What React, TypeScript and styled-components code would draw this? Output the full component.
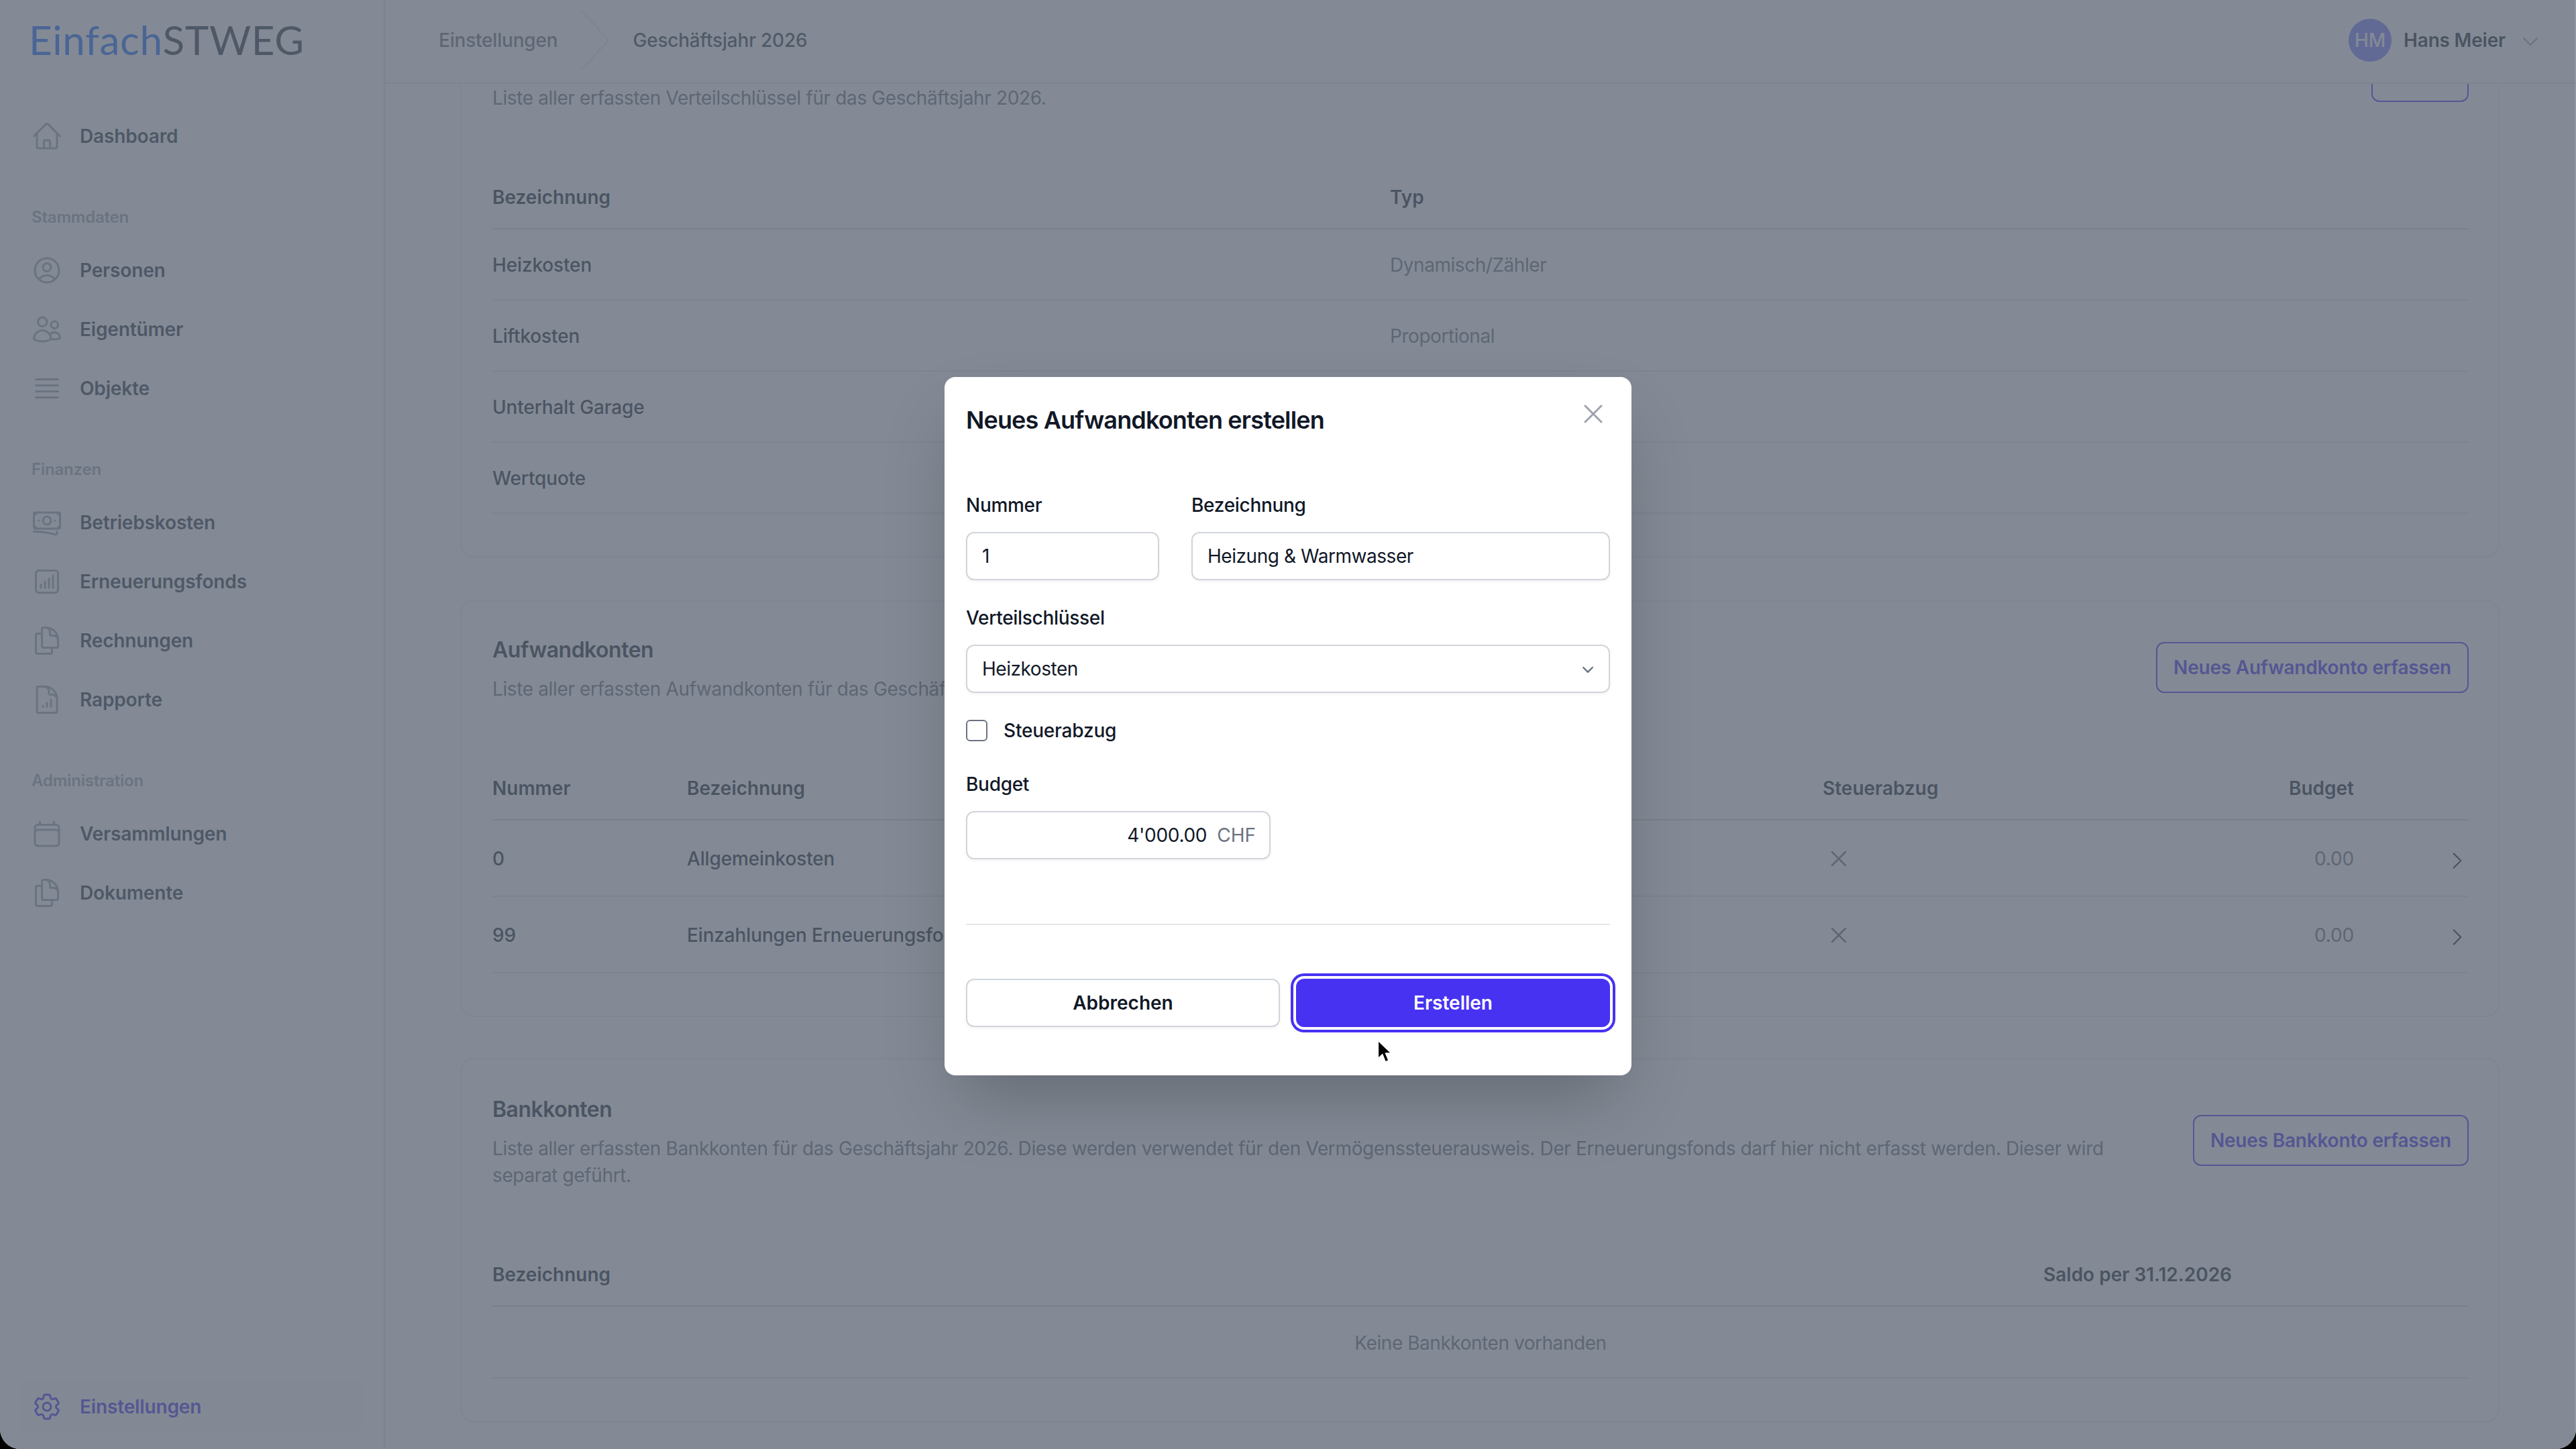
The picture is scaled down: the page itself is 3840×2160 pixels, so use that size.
import React from 'react';
import styled, { createGlobalStyle } from 'styled-components';
import {
  HiOutlineBanknotes,
  HiOutlineBars4,
  HiOutlineCalendar,
  HiOutlineChartBarSquare,
  HiOutlineChevronDown,
  HiOutlineChevronRight,
  HiOutlineCog6Tooth,
  HiOutlineDocumentChartBar,
  HiOutlineDocumentDuplicate,
  HiOutlineHome,
  HiOutlineUserCircle,
  HiOutlineUsers,
  HiOutlineXMark,
  HiMiniChevronDown,
} from 'react-icons/hi2';

const indigo = '#4732f2';

const GlobalStyle = createGlobalStyle`
  html, body {
    margin: 0;
    background: #000;
  }
  body {
    font-family: Inter, "Liberation Sans", sans-serif;
    font-size: 28px;
    line-height: 40px;
    color: #1f2937;
  }
  * {
    box-sizing: border-box;
  }
`;

const Shell = styled.div`
  position: relative;
  display: flex;
  width: 3840px;
  height: 2160px;
  overflow: hidden;
  background: #fff;
  border-bottom-left-radius: 30px;
  border-bottom-right-radius: 30px;
`;

const Sidebar = styled.aside`
  display: flex;
  flex-direction: column;
  flex: none;
  width: 574px;
  height: 100%;
  padding-bottom: 23px;
  border-right: 2px solid #e5e7eb;
`;

const Logo = styled.div`
  display: flex;
  align-items: center;
  height: 118px;
  padding-left: 43px;
  margin-bottom: 45px;
  font-family: Lato, "Open Sans", sans-serif;
  font-size: 60px;
  line-height: 64px;
  letter-spacing: 0.7px;
  color: #323a46;
`;

const LogoAccent = styled.span`
  color: #1f6cff;
`;

const NavGroup = styled.nav`
  display: flex;
  flex-direction: column;
  gap: 8px;
  margin-bottom: 61px;
`;

const GroupLabel = styled.div`
  height: 40px;
  margin: 0 0 11px 47px;
  font-size: 24px;
  line-height: 40px;
  font-weight: 600;
  letter-spacing: -0.2px;
  color: #9ca3af;
`;

const NavItem = styled.a<{ $active?: boolean }>`
  display: flex;
  align-items: center;
  gap: 25px;
  height: 80px;
  margin: 0 32px 0 31px;
  padding-left: 15px;
  border-radius: 12px;
  font-weight: 600;
  letter-spacing: -0.15px;
  color: ${({ $active }) => ($active ? indigo : '#2f3947')};
  background: ${({ $active }) => ($active ? '#f9fafb' : 'transparent')};
  svg {
    flex: none;
    width: 48px;
    height: 48px;
    color: ${({ $active }) => ($active ? indigo : '#9ca3af')};
  }
`;

const SidebarFooter = styled.div`
  margin-top: auto;
`;

const Main = styled.div`
  display: flex;
  flex-direction: column;
  flex: 1;
  min-width: 0;
`;

const Header = styled.header`
  display: flex;
  align-items: center;
  flex: none;
  height: 125px;
  padding: 0 52px 4px 80px;
  border-bottom: 2px solid #e5e7eb;
`;

const Crumbs = styled.div`
  display: flex;
  align-items: center;
  gap: 34px;
  flex: 1;
  font-weight: 500;
  letter-spacing: -0.2px;
`;

const Crumb = styled.span<{ $current?: boolean }>`
  color: ${({ $current }) => ($current ? '#374151' : '#6b7280')};
`;

const CrumbArrow = styled.svg`
  flex: none;
  width: 44px;
  height: 88px;
  fill: #e5e7eb;
`;

const Avatar = styled.div`
  display: flex;
  align-items: center;
  justify-content: center;
  width: 64px;
  height: 64px;
  margin-right: 18px;
  border-radius: 50%;
  background: #7a7cff;
  color: #fff;
  font-weight: 500;
`;

const UserName = styled.span`
  margin-right: 21px;
  font-weight: 600;
  letter-spacing: -0.2px;
`;

const UserChevron = styled(HiOutlineChevronDown)`
  width: 32px;
  height: 32px;
  margin-top: 4px;
  color: #9ca3af;
`;

const Scroller = styled.main`
  flex: 1;
  min-height: 0;
  overflow: hidden;
  padding: 0 114px 0 112px;
`;

const Card = styled.section<{ $top: number; $gap: number }>`
  margin-top: ${({ $gap }) => $gap}px;
  padding: ${({ $top }) => $top}px 44px 63px 46px;
  border: 2px solid #eceef1;
  border-radius: 20px;
  background: #fff;
`;

const CardHead = styled.div`
  display: flex;
  align-items: center;
  justify-content: space-between;
  gap: 64px;
  margin-bottom: 80px;
`;

const CardIntro = styled.div<{ $offset?: number }>`
  flex: 1;
  padding-top: ${({ $offset }) => $offset ?? 0}px;
`;

const CardTitle = styled.h2`
  margin: 0 0 14px;
  padding-top: 2px;
  font-size: 32px;
  line-height: 48px;
  font-weight: 600;
  letter-spacing: -0.5px;
  color: #1f2937;
`;

const CardText = styled.p`
  margin: 0;
  letter-spacing: -0.37px;
  color: #6b7280;
`;

const OutlineButton = styled.button<{ $width?: number }>`
  flex: none;
  width: ${({ $width }) => ($width ? `${$width}px` : 'auto')};
  height: 76px;
  padding: 0 24px;
  border: 2px solid ${indigo};
  border-radius: 12px;
  background: #fff;
  color: ${indigo};
  font: 600 28px/40px Inter, sans-serif;
  letter-spacing: -0.2px;
`;

const Row = styled.div<{ $cols: string; $height: number; $head?: boolean }>`
  display: grid;
  grid-template-columns: ${({ $cols }) => $cols};
  align-items: center;
  height: ${({ $height }) => $height}px;
  padding-top: ${({ $head }) => ($head ? 1 : 2)}px;
  border-bottom: 2px solid ${({ $head }) => ($head ? '#d1d5db' : '#e5e7eb')};
  font-weight: ${({ $head }) => ($head ? 600 : 500)};
  letter-spacing: ${({ $head }) => ($head ? 0 : -0.15)}px;
`;

const MutedCell = styled.span`
  color: #6b7280;
  font-weight: 400;
  letter-spacing: -0.45px;
`;

const RightCell = styled.span<{ $muted?: boolean }>`
  text-align: right;
  color: ${({ $muted }) => ($muted ? '#6b7280' : 'inherit')};
  font-weight: ${({ $muted }) => ($muted ? 400 : 'inherit')};
`;

const EmptyRow = styled.div`
  display: flex;
  align-items: center;
  justify-content: center;
  height: 107px;
  padding-top: 2px;
  border-bottom: 2px solid #e5e7eb;
  letter-spacing: -0.45px;
  color: #6b7280;
`;

const CrossIcon = styled(HiOutlineXMark)`
  width: 40px;
  height: 40px;
  margin-left: 4px;
  color: #6b7280;
`;

const RowChevron = styled(HiOutlineChevronRight)`
  justify-self: end;
  width: 34px;
  height: 34px;
  margin-top: 6px;
  color: #1f2937;
`;

const Overlay = styled.div`
  position: absolute;
  inset: 0;
  display: flex;
  align-items: center;
  justify-content: center;
  padding-top: 4px;
  background: rgba(90, 99, 114, 0.75);
  box-shadow: inset -2px 0 0 rgba(255, 255, 255, 0.1);
`;

const Modal = styled.div`
  width: 1024px;
  padding: 36px 32px 72px;
  border-radius: 16px;
  background: #fff;
  color: #111827;
  box-shadow: 0 50px 100px -24px rgba(0, 0, 0, 0.25);
`;

const ModalHead = styled.div`
  display: flex;
  align-items: flex-start;
  justify-content: space-between;
  margin-bottom: 75px;
`;

const ModalTitle = styled.h3`
  margin: 0;
  font-size: 36px;
  line-height: 56px;
  font-weight: 600;
  letter-spacing: -0.85px;
`;

const CloseIcon = styled(HiOutlineXMark)`
  width: 48px;
  height: 48px;
  margin: -5px 1px 0 0;
  color: #9ca3af;
`;

const FieldGrid = styled.div`
  display: grid;
  grid-template-columns: 288px 1fr;
  gap: 48px;
`;

const Field = styled.div<{ $gap?: number }>`
  margin-top: ${({ $gap }) => $gap ?? 0}px;
`;

const Label = styled.label`
  display: block;
  margin-bottom: 16px;
  line-height: 48px;
  font-weight: 500;
  letter-spacing: -0.3px;
`;

const TextInput = styled.input`
  display: block;
  width: 100%;
  height: 72px;
  padding: 0 22px;
  border: 2px solid #d1d5db;
  border-radius: 12px;
  background: #fff;
  color: #111827;
  font: 400 28px/48px Inter, sans-serif;
  letter-spacing: -0.45px;
  box-shadow: 0 2px 4px rgba(0, 0, 0, 0.05);
  outline: none;
`;

const SelectBox = styled.div`
  display: flex;
  align-items: center;
  justify-content: space-between;
  height: 72px;
  padding: 0 15px 0 22px;
  border: 2px solid #d1d5db;
  border-radius: 12px;
  letter-spacing: -0.45px;
  box-shadow: 0 2px 4px rgba(0, 0, 0, 0.05);
  svg {
    width: 32px;
    height: 32px;
    color: #6b7280;
  }
`;

const CheckRow = styled.div`
  display: flex;
  align-items: center;
  gap: 24px;
  height: 48px;
  margin-top: 32px;
  font-weight: 500;
  letter-spacing: -0.2px;
`;

const Checkbox = styled.input`
  appearance: none;
  width: 32px;
  height: 32px;
  margin: 0;
  border: 2px solid #6b7280;
  border-radius: 6px;
  background: #fff;
`;

const MoneyBox = styled.div`
  display: flex;
  align-items: center;
  gap: 15px;
  width: 454px;
  height: 72px;
  padding: 0 20px 0 22px;
  border: 2px solid #d1d5db;
  border-radius: 12px;
  box-shadow: 0 2px 4px rgba(0, 0, 0, 0.05);
`;

const MoneyInput = styled.input`
  flex: 1;
  min-width: 0;
  padding: 0;
  border: 0;
  outline: none;
  text-align: right;
  color: #111827;
  font: 400 28px/48px Inter, sans-serif;
  letter-spacing: -0.3px;
`;

const MoneyUnit = styled.span`
  color: #6b7280;
`;

const Divider = styled.hr`
  height: 2px;
  margin: 96px 0 80px;
  border: 0;
  background: #e5e7eb;
`;

const Actions = styled.div`
  display: grid;
  grid-template-columns: 1fr 1fr;
  gap: 24px;
`;

const Button = styled.button<{ $primary?: boolean }>`
  height: 72px;
  border: ${({ $primary }) => ($primary ? '0' : '2px solid #d1d5db')};
  border-radius: 12px;
  background: ${({ $primary }) => ($primary ? indigo : '#fff')};
  color: ${({ $primary }) => ($primary ? '#fff' : '#111827')};
  font: 600 28px/48px Inter, sans-serif;
  box-shadow: ${({ $primary }) =>
    $primary ? `0 0 0 4px #fff, 0 0 0 8px ${indigo}` : '0 2px 4px rgba(0, 0, 0, 0.05)'};
`;

const Cursor = styled.svg`
  position: absolute;
  left: 2052px;
  top: 1550px;
  width: 24px;
  height: 36px;
`;

type NavEntry = { label: string; icon: React.ReactNode };

const groups: { title: string; items: NavEntry[] }[] = [
  {
    title: 'Stammdaten',
    items: [
      { label: 'Personen', icon: <HiOutlineUserCircle /> },
      { label: 'Eigentümer', icon: <HiOutlineUsers /> },
      { label: 'Objekte', icon: <HiOutlineBars4 /> },
    ],
  },
  {
    title: 'Finanzen',
    items: [
      { label: 'Betriebskosten', icon: <HiOutlineBanknotes /> },
      { label: 'Erneuerungsfonds', icon: <HiOutlineChartBarSquare /> },
      { label: 'Rechnungen', icon: <HiOutlineDocumentDuplicate /> },
      { label: 'Rapporte', icon: <HiOutlineDocumentChartBar /> },
    ],
  },
  {
    title: 'Administration',
    items: [
      { label: 'Versammlungen', icon: <HiOutlineCalendar /> },
      { label: 'Dokumente', icon: <HiOutlineDocumentDuplicate /> },
    ],
  },
];

const keyCols = '1338px 1fr';
const accountCols = '290px 1693px 395px 397px 1fr';
const bankCols = '1fr 800px 353px';

const keys = [
  ['Heizkosten', 'Dynamisch/Zähler'],
  ['Liftkosten', 'Proportional'],
  ['Unterhalt Garage', 'Proportional'],
  ['Wertquote', 'Proportional'],
];

const accounts = [
  ['0', 'Allgemeinkosten'],
  ['99', 'Einzahlungen Erneuerungsfonds'],
];

export default function App() {
  return (
    <Shell>
      <GlobalStyle />
      <Sidebar>
        <Logo>
          <LogoAccent>Einfach</LogoAccent>
          <span>STWEG</span>
        </Logo>
        <NavGroup>
          <NavItem>
            <HiOutlineHome />
            Dashboard
          </NavItem>
        </NavGroup>
        {groups.map((group) => (
          <NavGroup key={group.title}>
            <GroupLabel>{group.title}</GroupLabel>
            {group.items.map((item) => (
              <NavItem key={item.label}>
                {item.icon}
                {item.label}
              </NavItem>
            ))}
          </NavGroup>
        ))}
        <SidebarFooter>
          <NavItem $active>
            <HiOutlineCog6Tooth />
            Einstellungen
          </NavItem>
        </SidebarFooter>
      </Sidebar>

      <Main>
        <Header>
          <Crumbs>
            <Crumb>Einstellungen</Crumb>
            <CrumbArrow viewBox="0 0 24 44" preserveAspectRatio="none">
              <path d="M.293 0l22 22-22 22h1.414l22-22-22-22H.293z" />
            </CrumbArrow>
            <Crumb $current>Geschäftsjahr 2026</Crumb>
          </Crumbs>
          <Avatar>HM</Avatar>
          <UserName>Hans Meier</UserName>
          <UserChevron />
        </Header>

        <Scroller>
          {/* scrolled: title and button label of this card sit behind the header */}
          <Card $gap={-111} $top={46}>
            <CardHead>
              <CardIntro $offset={64}>
                <CardText>Liste aller erfassten Verteilschlüssel für das Geschäftsjahr 2026.</CardText>
              </CardIntro>
              <OutlineButton $width={145} />
            </CardHead>
            <Row $cols={keyCols} $height={96} $head>
              <span>Bezeichnung</span>
              <span>Typ</span>
            </Row>
            {keys.map(([name, type]) => (
              <Row key={name} $cols={keyCols} $height={106}>
                <span>{name}</span>
                <MutedCell>{type}</MutedCell>
              </Row>
            ))}
          </Card>

          <Card $gap={64} $top={46}>
            <CardHead>
              <CardIntro>
                <CardTitle>Aufwandkonten</CardTitle>
                <CardText>Liste aller erfassten Aufwandkonten für das Geschäftsjahr 2026.</CardText>
              </CardIntro>
              <OutlineButton>Neues Aufwandkonto erfassen</OutlineButton>
            </CardHead>
            <Row $cols={accountCols} $height={96} $head>
              <span>Nummer</span>
              <span>Bezeichnung</span>
              <span>Steuerabzug</span>
              <RightCell>Budget</RightCell>
            </Row>
            {accounts.map(([number, name]) => (
              <Row key={number} $cols={accountCols} $height={114}>
                <span>{number}</span>
                <span>{name}</span>
                <CrossIcon />
                <RightCell $muted>0.00</RightCell>
                <RowChevron />
              </Row>
            ))}
          </Card>

          <Card $gap={61} $top={49}>
            <CardHead>
              <CardIntro>
                <CardTitle>Bankkonten</CardTitle>
                <CardText>
                  Liste aller erfassten Bankkonten für das Geschäftsjahr 2026. Diese werden verwendet für den
                  Vermögenssteuerausweis. Der Erneuerungsfonds darf hier nicht erfasst werden. Dieser wird separat
                  geführt.
                </CardText>
              </CardIntro>
              <OutlineButton>Neues Bankkonto erfassen</OutlineButton>
            </CardHead>
            <Row $cols={bankCols} $height={96} $head>
              <span>Bezeichnung</span>
              <RightCell>Saldo per 31.12.2026</RightCell>
            </Row>
            <EmptyRow>Keine Bankkonten vorhanden</EmptyRow>
          </Card>
        </Scroller>
      </Main>

      <Overlay>
        <Modal>
          <ModalHead>
            <ModalTitle>Neues Aufwandkonten erstellen</ModalTitle>
            <CloseIcon />
          </ModalHead>
          <FieldGrid>
            <Field>
              <Label>Nummer</Label>
              <TextInput readOnly value="1" />
            </Field>
            <Field>
              <Label>Bezeichnung</Label>
              <TextInput readOnly value="Heizung & Warmwasser" />
            </Field>
          </FieldGrid>
          <Field $gap={32}>
            <Label>Verteilschlüssel</Label>
            <SelectBox>
              <span>Heizkosten</span>
              <HiMiniChevronDown />
            </SelectBox>
          </Field>
          <CheckRow>
            <Checkbox type="checkbox" readOnly />
            <span>Steuerabzug</span>
          </CheckRow>
          <Field $gap={32}>
            <Label>Budget</Label>
            <MoneyBox>
              <MoneyInput readOnly value="4'000.00" />
              <MoneyUnit>CHF</MoneyUnit>
            </MoneyBox>
          </Field>
          <Divider />
          <Actions>
            <Button>Abbrechen</Button>
            <Button $primary>Erstellen</Button>
          </Actions>
        </Modal>
        <Cursor viewBox="0 0 22 34">
          <path
            d="M2 1.5 2 26l6-5.6L12.2 31l4.3-1.9-4.2-10.3H20L2 1.5z"
            fill="#000"
            stroke="#fff"
            strokeWidth="1.2"
          />
        </Cursor>
      </Overlay>
    </Shell>
  );
}
